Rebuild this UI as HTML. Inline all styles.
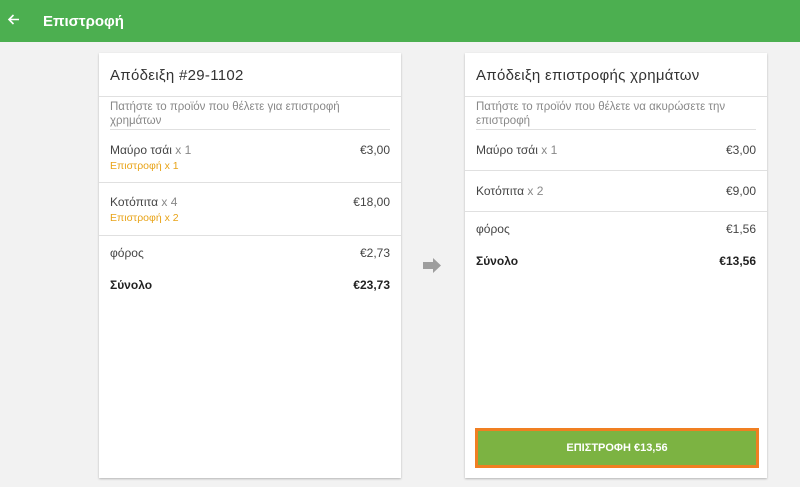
<!DOCTYPE html>
<html><head><meta charset="utf-8"><style>
*{margin:0;padding:0;box-sizing:border-box}
body{width:800px;height:487px;background:#f2f2f2;font-family:"Liberation Sans",Roboto,sans-serif;position:relative;overflow:hidden;color:#444}
.hdr{position:absolute;left:0;top:0;width:800px;height:42px;background:#4caf50;color:#fff}
.hdr .t{position:absolute;left:43px;top:13px;font-size:15px;font-weight:bold}
.card{position:absolute;top:53px;width:302px;height:425px;background:#fff;box-shadow:0 1px 2px rgba(0,0,0,.25)}
.title{position:absolute;left:11px;top:14px;font-size:15px;color:#333;letter-spacing:.3px}
.hl{position:absolute;left:0;right:0;height:1px;background:#e0e0e0}
.sub{position:absolute;left:11px;top:47px;width:270px;font-size:11.5px;line-height:14px;color:#888}
.r{position:absolute;left:11px;right:11px;font-size:12px}
.r .p{position:absolute;right:0;top:0}
.g{color:#888}
.o{color:#e8a317;font-size:10.5px;margin-top:3px}
b{color:#222}
</style></head><body>
<div class="hdr">
<svg style="position:absolute;left:7px;top:13px" width="13" height="13" viewBox="0 0 13 13"><path d="M12 6.5H2M6.5 2L2 6.5 6.5 11" stroke="#fff" stroke-width="1.6" fill="none"/></svg>
<div class="t">Επιστροφή</div></div>

<div class="card" style="left:99px">
<div class="title">Απόδειξη #29-1102</div>
<div class="hl" style="top:43px"></div>
<div class="sub">Πατήστε το προϊόν που θέλετε για επιστροφή χρημάτων</div>
<div class="hl" style="top:76px;left:11px;right:11px"></div>
<div class="r" style="top:90px">Μαύρο τσάι <span class="g">x 1</span><span class="p">€3,00</span><div class="o">Επιστροφή x 1</div></div>
<div class="hl" style="top:129px"></div>
<div class="r" style="top:142px">Κοτόπιτα <span class="g">x 4</span><span class="p">€18,00</span><div class="o">Επιστροφή x 2</div></div>
<div class="hl" style="top:182px"></div>
<div class="r" style="top:193px">φόρος<span class="p">€2,73</span></div>
<div class="r" style="top:225px"><b>Σύνολο</b><span class="p"><b>€23,73</b></span></div>
</div>

<svg style="position:absolute;left:423px;top:258px" width="19" height="15" viewBox="0 0 19 15"><path d="M0 4H10V0L18 7.5 10 15V11H0Z" fill="#9e9e9e"/></svg>

<div class="card" style="left:465px">
<div class="title">Απόδειξη επιστροφής χρημάτων</div>
<div class="hl" style="top:43px"></div>
<div class="sub">Πατήστε το προϊόν που θέλετε να ακυρώσετε την επιστροφή</div>
<div class="hl" style="top:76px;left:11px;right:11px"></div>
<div class="r" style="top:90px">Μαύρο τσάι <span class="g">x 1</span><span class="p">€3,00</span></div>
<div class="hl" style="top:117px"></div>
<div class="r" style="top:131px">Κοτόπιτα <span class="g">x 2</span><span class="p">€9,00</span></div>
<div class="hl" style="top:158px"></div>
<div class="r" style="top:169px">φόρος<span class="p">€1,56</span></div>
<div class="r" style="top:201px"><b>Σύνολο</b><span class="p"><b>€13,56</b></span></div>
<div style="position:absolute;left:10px;top:375px;width:284px;height:40px;background:#7cb342;border:3px solid #f07f22;color:#fff;font-size:11px;font-weight:bold;text-align:center;line-height:34px">ΕΠΙΣΤΡΟΦΗ €13,56</div>
</div>
</body></html>
